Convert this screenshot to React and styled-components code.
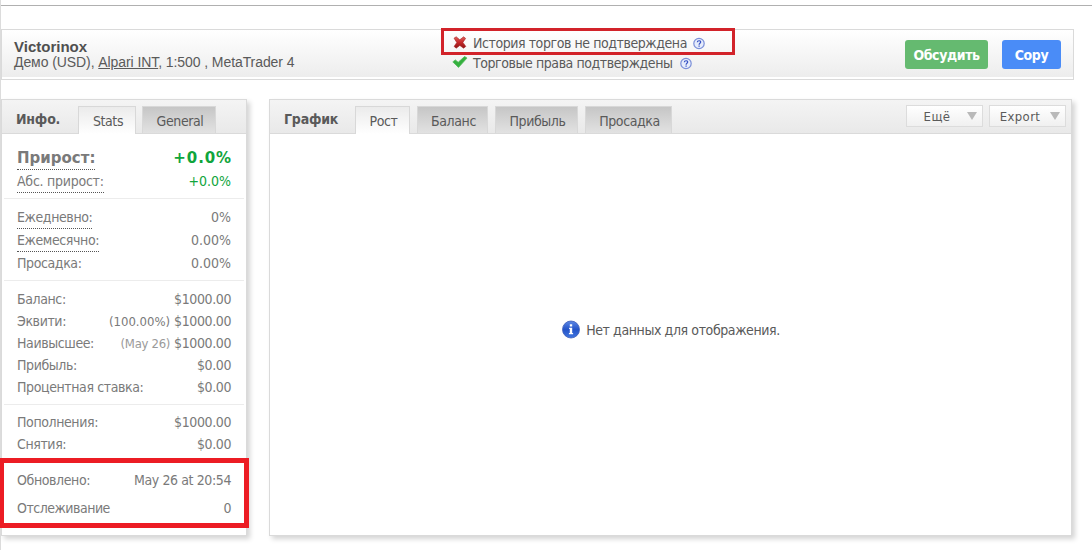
import styled, { createGlobalStyle } from 'styled-components';

const generalInfo = [
  {
    top: 13,
    bottom: 5,
    rows: [
      { label: 'Прирост:', value: '+0.0%', hint: true, big: true, green: true },
      { label: 'Абс. прирост:', value: '+0.0%', hint: true, green: true, spacing: -0.25 },
    ],
  },
  {
    top: 7,
    bottom: 6,
    rows: [
      { label: 'Ежедневно:', value: '0%', hint: true },
      { label: 'Ежемесячно:', value: '0.00%', hint: true },
      { label: 'Просадка:', value: '0.00%' },
    ],
  },
  {
    top: 7,
    bottom: 6,
    rows: [
      { label: 'Баланс:', value: '$1000.00' },
      { label: 'Эквити:', value: '$1000.00', note: '(100.00%)' },
      { label: 'Наивысшее:', value: '$1000.00', note: '(May 26)', pale: true },
      { label: 'Прибыль:', value: '$0.00' },
      { label: 'Процентная ставка:', value: '$0.00' },
    ],
  },
  {
    top: 6,
    bottom: 5,
    rows: [
      { label: 'Пополнения:', value: '$1000.00' },
      { label: 'Снятия:', value: '$0.00' },
    ],
  },
  {
    top: 8,
    bottom: 0,
    gap: 6,
    last: true,
    rows: [
      { label: 'Обновлено:', value: 'May 26 at 20:54' },
      { label: 'Отслеживание', value: '0', spacing: -0.5 },
    ],
  },
];

const chartTabs = [
  { label: 'Рост', width: 55, active: true },
  { label: 'Баланс', width: 71 },
  { label: 'Прибыль', width: 83 },
  { label: 'Просадка', width: 87 },
];

function CrossIcon() {
  return (
    <svg width="14" height="14" viewBox="0 0 14 14">
      <defs>
        <linearGradient id="cross" x1="0" y1="0" x2="0" y2="1">
          <stop offset="0" stopColor="#e0605c" />
          <stop offset="0.5" stopColor="#c4282a" />
          <stop offset="1" stopColor="#8c1414" />
        </linearGradient>
      </defs>
      <path
        d="M1 2.2 3.2.8 6.8 3.8 10.6.8l2 1.6L9.9 6.4l2.9 4-2.2 1.8L6.8 9.4l-3.6 2.8-2.1-1.8L3.8 6.5z"
        fill="url(#cross)"
        stroke="#a82325"
        strokeWidth="0.6"
        strokeLinejoin="round"
      />
    </svg>
  );
}

function CheckIcon() {
  return (
    <svg width="16" height="14" viewBox="0 0 16 14">
      <path
        d="M.8 5.9 3.3 3.9 6.2 6.3 12.6.5l2.4 1.6L6.5 11.4z"
        fill="#35b03f"
        stroke="#4fbb58"
        strokeWidth="0.8"
        strokeLinejoin="round"
      />
    </svg>
  );
}

function HelpIcon() {
  return (
    <svg width="12" height="14" viewBox="0 -1 12 14">
      <circle cx="6" cy="6.5" r="5.2" fill="#e6ecfb" stroke="#7b8fd8" strokeWidth="1.2" />
      <path
        d="M4.3 5.2C4.4 3.3 7.7 3.3 7.7 5.1 7.7 6.3 6.1 6.3 6.1 7.7M6.1 8.6v1.2"
        fill="none"
        stroke="#3550c4"
        strokeWidth="1.2"
      />
    </svg>
  );
}

function InfoIcon() {
  return (
    <svg width="20" height="20" viewBox="0 0 20 20">
      <defs>
        <linearGradient id="info" x1="0" y1="0" x2="0" y2="1">
          <stop offset="0" stopColor="#5c88e6" />
          <stop offset="0.5" stopColor="#2554c8" />
          <stop offset="1" stopColor="#3f76e0" />
        </linearGradient>
      </defs>
      <circle cx="10" cy="9.5" r="8.5" fill="url(#info)" stroke="#3c5cb8" strokeWidth="0.8" />
      <path d="M8.8 4.2h2.4v2.2H8.8zM8.1 7.7h3.1v5.2h.9v1.3H7.9v-1.3h.9V9h-.7z" fill="#fff" />
    </svg>
  );
}

export default function App() {
  return (
    <Page>
      <GlobalStyle />
      <TopLine />

      <Header>
        <Account>
          <strong>Victorinox</strong>
          <span>
            Демо (USD), <u>Alpari INT</u>, 1:500 , MetaTrader 4
          </span>
        </Account>
        <Checks>
          <Check>
            <CrossIcon />
            <CheckText $gap={6}>История торгов не подтверждена</CheckText>
            <HelpIcon />
          </Check>
          <Check>
            <CheckIcon />
            <CheckText $gap={8}>Торговые права подтверждены</CheckText>
            <HelpIcon />
          </Check>
          <HistoryMark />
        </Checks>
        <Actions>
          <Button $color="#65ba70" $width={83}>
            Обсудить
          </Button>
          <Button $color="#4a8cf7" $width={59}>
            Copy
          </Button>
        </Actions>
      </Header>

      <Columns>
        <Panel $width={246}>
          <PanelHeader $gap={6}>
            <PanelTitle $width={56}>Инфо.</PanelTitle>
            <Tab $active $width={58}>
              Stats
            </Tab>
            <Tab $width={74}>General</Tab>
          </PanelHeader>
          {generalInfo.map(({ top, bottom, gap, last, rows }) => (
            <Group key={rows[0].label} $top={top} $bottom={bottom} $gap={gap} $last={last}>
              {rows.map(({ label, value, note, hint, big, green, pale, spacing }) => (
                <Row key={label} $big={big} $hint={hint}>
                  <Label $hint={hint} $spacing={spacing}>
                    {label}
                  </Label>
                  <Value $green={green} $big={big} $percent={value.endsWith('%')}>
                    {note && <Note $pale={pale}>{note}</Note>}
                    {value}
                  </Value>
                </Row>
              ))}
            </Group>
          ))}
          <UpdateMark />
        </Panel>

        <Panel $width={803}>
          <PanelHeader $gap={7}>
            <PanelTitle $width={64}>График</PanelTitle>
            {chartTabs.map(({ label, width, active }) => (
              <Tab key={label} $width={width} $active={active}>
                {label}
              </Tab>
            ))}
            <Menus>
              <Menu>
                <span>Ещё</span>
                <Arrow />
              </Menu>
              <Menu>
                <span>Export</span>
                <Arrow />
              </Menu>
            </Menus>
          </PanelHeader>
          <Empty>
            <InfoIcon />
            <span>Нет данных для отображения.</span>
          </Empty>
        </Panel>
      </Columns>
    </Page>
  );
}

const GlobalStyle = createGlobalStyle`
  body {
    margin: 0;
    background: #fff;
    overflow: hidden;
  }

  * {
    box-sizing: border-box;
  }
`;

const Page = styled.div`
  height: 550px;
  border-left: 1px solid #dcdcdc;
  color: #5a5a5a;
  font-family: 'DejaVu Sans Condensed', 'DejaVu Sans', sans-serif;
  font-stretch: condensed;
  font-size: 14px;
  letter-spacing: -0.4px;
  white-space: nowrap;
`;

const TopLine = styled.div`
  height: 6px;
  border-bottom: 1px solid #b0b0b0;
`;

const Header = styled.header`
  display: flex;
  width: 1073px;
  height: 51px;
  margin-top: 23px;
  border: 1px solid #dadada;
  background: linear-gradient(#fff, #ececec);
  box-shadow: inset 0 -2px #fff;
`;

const Account = styled.div`
  display: flex;
  flex-direction: column;
  width: 438px;
  padding: 9px 0 0 12px;
  font-family: 'Liberation Sans', Arial, sans-serif;
  font-size: 14px;
  line-height: 15px;
  letter-spacing: -0.08px;

  strong {
    color: #505050;
    font-size: 15px;
    line-height: 16px;
    letter-spacing: 0;
  }
`;

const Checks = styled.div`
  position: relative;
  flex: 1;
  padding: 3px 0 0 12px;
`;

const Check = styled.div`
  display: flex;
  align-items: center;
  height: 20px;

  svg:first-child {
    width: 16px;
  }
`;

const CheckText = styled.span`
  margin: 0 ${({ $gap }) => $gap}px 0 5px;
  letter-spacing: -0.43px;
`;

const HistoryMark = styled.div`
  position: absolute;
  top: -2px;
  left: 1px;
  width: 294px;
  height: 27px;
  border: 3px solid #d2232a;
`;

const Actions = styled.div`
  display: flex;
  gap: 14px;
  padding: 10px 12px 0 0;
`;

const Button = styled.button`
  width: ${({ $width }) => $width}px;
  height: 29px;
  padding: 0;
  border: 0;
  border-radius: 3px;
  background: ${({ $color }) => $color};
  color: #fff;
  font: bold 14px 'DejaVu Sans Condensed', 'DejaVu Sans', sans-serif;
  font-stretch: condensed;
  letter-spacing: -0.4px;
`;

const Columns = styled.main`
  display: flex;
  gap: 22px;
  margin-top: 19px;
`;

const Panel = styled.section`
  position: relative;
  width: ${({ $width }) => $width}px;
  height: 437px;
  border: 1px solid #dadada;
  background: #fff;
  box-shadow: 3px 3px 5px #d4d4d4;
`;

const PanelHeader = styled.div`
  display: flex;
  gap: ${({ $gap }) => $gap}px;
  height: 34px;
  padding: 6px 5px 0 14px;
  border-bottom: 1px solid #dadada;
  background: linear-gradient(#f4f4f4, #e9e9e9);
`;

const PanelTitle = styled.h2`
  width: ${({ $width }) => $width}px;
  margin: 0;
  font-size: 14px;
  line-height: 26px;
  letter-spacing: -0.2px;
`;

const Tab = styled.div`
  width: ${({ $width }) => $width}px;
  height: ${({ $active }) => ($active ? 28 : 27)}px;
  padding-left: 2px;
  border: 1px solid #d8d8d8;
  border-bottom: 0;
  background: ${({ $active }) =>
    $active ? 'linear-gradient(#ebebeb, #fff)' : 'linear-gradient(#c6c6c6, #e2e2e2)'};
  line-height: 29px;
  text-align: center;
`;

const Menus = styled.div`
  display: flex;
  gap: 6px;
  margin-left: auto;
  margin-top: -1px;
`;

const Menu = styled.div`
  display: flex;
  align-items: center;
  width: 77px;
  height: 22px;
  padding-right: 5px;
  border: 1px solid #dcdcdc;
  background: linear-gradient(#fff, #f0f0f0);
  font-size: 13px;
  letter-spacing: 0.4px;

  span {
    flex: 1;
    text-align: center;
  }
`;

const Arrow = styled.i`
  border: 5px solid transparent;
  border-top: 8px solid #b9b9b9;
  border-bottom: 0;
`;

const Group = styled.div`
  display: flex;
  flex-direction: column;
  gap: ${({ $gap }) => $gap || 0}px;
  margin: 0 2px;
  padding: ${({ $top, $bottom }) => `${$top}px 13px ${$bottom}px 13px`};
  border-bottom: ${({ $last }) => ($last ? 0 : '1px solid #ececec')};
  color: #7a7a7a;
`;

const Row = styled.div`
  display: flex;
  justify-content: space-between;
  height: ${({ $hint }) => ($hint ? 23 : 22)}px;
  line-height: 22px;
  ${({ $big }) =>
    $big &&
    `
    font-family: 'DejaVu Sans', sans-serif;
    font-stretch: normal;
    font-weight: bold;
    font-size: 15px;
    letter-spacing: 0;
  `}
`;

const Label = styled.span`
  ${({ $hint }) => $hint && 'border-bottom: 1px dotted #555;'}
  ${({ $spacing }) => $spacing && `letter-spacing: ${$spacing}px;`}
`;

const Value = styled.span`
  letter-spacing: ${({ $percent }) => ($percent ? 0 : -0.4)}px;
  ${({ $green }) => $green && 'color: #0fa53c;'}
  ${({ $big }) => $big && 'letter-spacing: 0.9px; margin-right: -1px;'}
`;

const Note = styled.span`
  margin-right: 4px;
  font-size: 13px;
  letter-spacing: ${({ $pale }) => ($pale ? -0.3 : 0)}px;
  ${({ $pale }) => $pale && 'color: #9a9a9a;'}
`;

const UpdateMark = styled.div`
  position: absolute;
  top: 358px;
  left: -3px;
  width: 250px;
  height: 70px;
  border: 5px solid #ec1c24;
`;

const Empty = styled.div`
  display: flex;
  align-items: center;
  justify-content: center;
  gap: 5px;
  height: 391px;
`;
